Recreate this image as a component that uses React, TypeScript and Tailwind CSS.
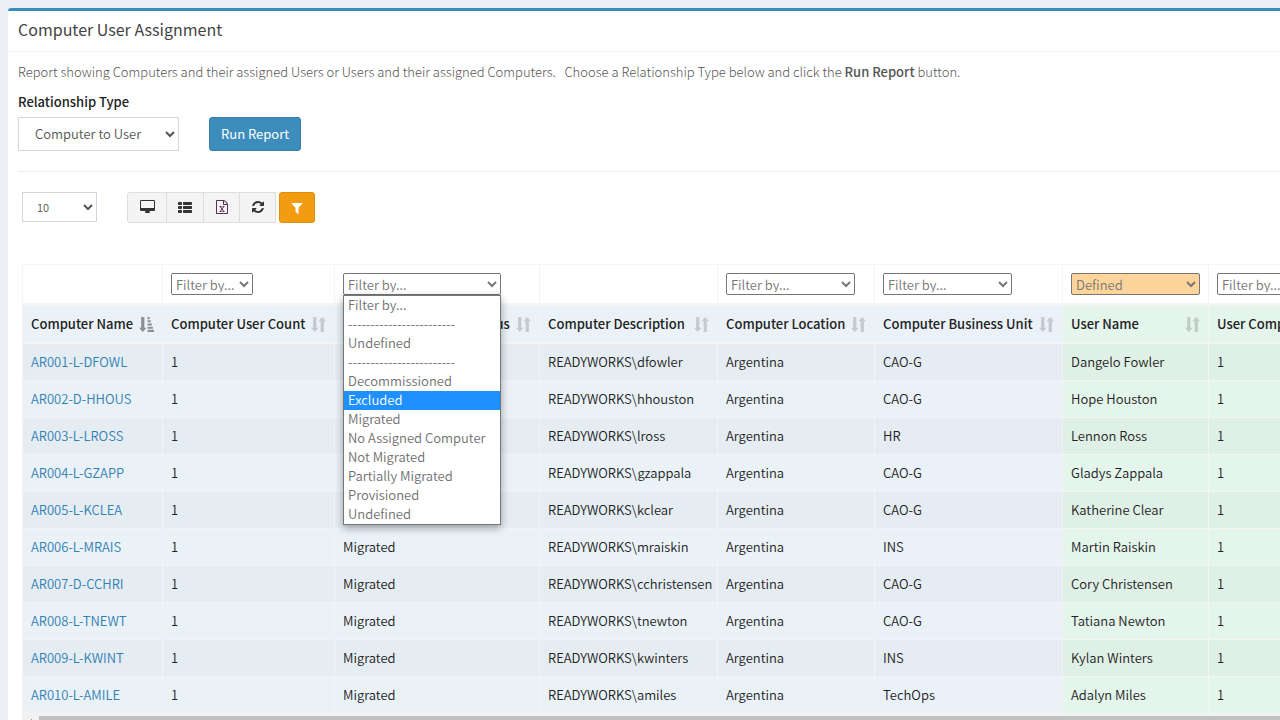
import { useState } from 'react';
import clsx from 'clsx';

type Tone = 'blue' | 'indigo' | 'green';

interface Column {
  key: string;
  label: string;
  width: string;
  tone: Tone;
  filter?: string;
  filterWidth?: string;
}

const COLUMNS: Column[] = [
  { key: 'name', label: 'Computer Name', width: 'w-[140px]', tone: 'blue' },
  { key: 'count', label: 'Computer User Count', width: 'w-[172px]', tone: 'blue', filter: 'Filter by...', filterWidth: 'w-[82px]' },
  { key: 'status', label: 'Computer Migration Status', width: 'w-[205px]', tone: 'blue', filter: 'Filter by...', filterWidth: 'w-[158px]' },
  { key: 'description', label: 'Computer Description', width: 'w-[178px]', tone: 'blue' },
  { key: 'location', label: 'Computer Location', width: 'w-[157px]', tone: 'blue', filter: 'Filter by...', filterWidth: 'w-[129px]' },
  { key: 'unit', label: 'Computer Business Unit', width: 'w-[188px]', tone: 'indigo', filter: 'Filter by...', filterWidth: 'w-[129px]' },
  { key: 'user', label: 'User Name', width: 'w-[146px]', tone: 'green', filter: 'Defined', filterWidth: 'w-[129px]' },
  { key: 'userCount', label: 'User Computer Count', width: 'w-[172px]', tone: 'green', filter: 'Filter by...', filterWidth: 'w-[82px]' },
];

const ROWS = [
  ['AR001-L-DFOWL', 'dfowler', 'CAO-G', 'Dangelo Fowler'],
  ['AR002-D-HHOUS', 'hhouston', 'CAO-G', 'Hope Houston'],
  ['AR003-L-LROSS', 'lross', 'HR', 'Lennon Ross'],
  ['AR004-L-GZAPP', 'gzappala', 'CAO-G', 'Gladys Zappala'],
  ['AR005-L-KCLEA', 'kclear', 'CAO-G', 'Katherine Clear'],
  ['AR006-L-MRAIS', 'mraiskin', 'INS', 'Martin Raiskin'],
  ['AR007-D-CCHRI', 'cchristensen', 'CAO-G', 'Cory Christensen'],
  ['AR008-L-TNEWT', 'tnewton', 'CAO-G', 'Tatiana Newton'],
  ['AR009-L-KWINT', 'kwinters', 'INS', 'Kylan Winters'],
  ['AR010-L-AMILE', 'amiles', 'TechOps', 'Adalyn Miles'],
].map(([name, login, unit, user]) => [name, '1', 'Migrated', `READYWORKS\\${login}`, 'Argentina', unit, user, '1']);

const STATUS_OPTIONS = [
  'Filter by...',
  '------------------------',
  'Undefined',
  '------------------------',
  'Decommissioned',
  'Excluded',
  'Migrated',
  'No Assigned Computer',
  'Not Migrated',
  'Partially Migrated',
  'Provisioned',
  'Undefined',
];

const LIGHT: Record<Tone, string> = { blue: 'bg-[#eaf2f8]', indigo: 'bg-[#eaf1f8]', green: 'bg-[#e4f5ec]' };
const DARK: Record<Tone, string> = { blue: 'bg-[#e5edf3]', indigo: 'bg-[#e5ecf3]', green: 'bg-[#dff0e7]' };

function DesktopIcon() {
  return (
    <svg viewBox="-64 0 1920 1792" className="h-[14px] w-[15px]" fill="currentColor" aria-hidden="true">
      <path d="M1728 992v-832q0-13-9.5-22.5t-22.5-9.5h-1600q-13 0-22.5 9.5t-9.5 22.5v832q0 13 9.5 22.5t22.5 9.5h1600q13 0 22.5-9.5t9.5-22.5zm128-832v1088q0 66-47 113t-113 47h-544q0 37 16 77.5t32 71 16 43.5q0 26-19 45t-45 19h-512q-26 0-45-19t-19-45q0-14 16-44t32-70 16-78h-544q-66 0-113-47t-47-113v-1088q0-66 47-113t113-47h1600q66 0 113 47t47 113z" />
    </svg>
  );
}

function ListIcon() {
  return (
    <svg viewBox="0 0 14 14" className="size-[14px]" fill="currentColor" aria-hidden="true">
      <path d="M.7 2h2.6q.7 0 .7.7v1.6q0 .7-.7.7H.7Q0 5 0 4.300V2.700Q0 2 .7 2zM.7 6h2.600q.7 0 .7.7v1.600q0 .7-.7.7H.7Q0 9 0 8.300V6.700Q0 6 .7 6zM.7 10h2.600q.7 0 .7.7v1.600q0 .7-.7.7H.7q-.7 0-.7-.7v-1.600q0-.7.7-.7zM5.700 2h7.600q.7 0 .7.7v1.600q0 .7-.7.7H5.700Q5 5 5 4.300V2.700Q5 2 5.700 2zM5.700 6h7.600q.7 0 .7.7v1.600q0 .7-.7.7H5.700Q5 9 5 8.300V6.700Q5 6 5.700 6zM5.700 10h7.600q.7 0 .7.7v1.600q0 .7-.7.7H5.700q-.7 0-.7-.7v-1.600q0-.7.7-.7z" />
    </svg>
  );
}

function ExcelIcon() {
  return (
    <svg viewBox="128 0 1536 1792" className="h-[14px] w-3" fill="#5a3050" aria-hidden="true">
      <path d="M1596 380q28 28 48 76t20 88v1152q0 40-28 68t-68 28h-1344q-40 0-68-28t-28-68v-1600q0-40 28-68t68-28h896q40 0 88 20t76 48zm-444-244v376h376q-10-29-22-41l-313-313q-12-12-41-22zm384 1528v-1024h-416q-40 0-68-28t-28-68v-416h-768v1536h1280zm-979-234v106h281v-106h-75l103-161q5-7 10-16.500t7.500-13.500 3.500-4h2q1 4 5 10 2 4 4.500 7.500t6 8 6.500 8.500l107 161h-76v106h291v-106h-68l-192-273 195-282h67v-107h-279v107h74l-103 159q-4 7-10 16.500t-9 13.500l-2 3h-2q-1-4-5-10-6-11-17-23l-106-159h76v-107h-290v107h68l189 272-194 283h-68z" />
    </svg>
  );
}

function RefreshIcon() {
  return (
    <svg viewBox="128 0 1536 1792" className="h-[14px] w-3" fill="currentColor" aria-hidden="true">
      <path d="M1639 1056q0 5-1 7-64 268-268 434.500t-478 166.500q-146 0-282.500-55t-243.500-157l-129 129q-19 19-45 19t-45-19-19-45v-448q0-26 19-45t45-19h448q26 0 45 19t19 45-19 45l-137 137q71 66 161 102t187 36q134 0 250-65t186-179q11-17 53-117 8-23 30-23h192q13 0 22.500 9.500t9.500 22.500zm25-800v448q0 26-19 45t-45 19h-448q-26 0-45-19t-19-45 19-45l138-138q-148-137-349-137-134 0-250 65t-186 179q-11 17-53 117-8 23-30 23h-199q-13 0-22.500-9.500t-9.500-22.500v-7q65-268 270-434.500t480-166.500q146 0 284 55.500t245 156.500l130-129q19-19 45-19t45 19 19 45z" />
    </svg>
  );
}

function FilterIcon() {
  return (
    <svg viewBox="0 0 1792 1792" className="size-[14px]" fill="currentColor" aria-hidden="true">
      <path d="M1595 295q17 41-14 70l-493 493v742q0 42-39 59-13 5-25 5-27 0-45-19l-256-256q-19-19-19-45v-486l-493-493q-31-29-14-70 17-39 59-39h1280q42 0 59 39z" />
    </svg>
  );
}

function SortIcon({ active }: { active: boolean }) {
  return (
    <svg viewBox="0 0 14 14" className={clsx('size-[15px] shrink-0', active ? 'opacity-50' : 'opacity-20')} fill="#333" aria-hidden="true">
      <path d="M2 0h3v10h2l-3.500 4L0 10h2z" />
      {active ? (
        <path d="M8 0h2v2H8zM8 3h3v2H8zM8 6h4v2H8zM8 9h5v2H8zM8 12h6v2H8z" />
      ) : (
        <path d="M10.500 0L14 4h-2v10H9V4H7z" />
      )}
    </svg>
  );
}

function FilterSelect({ column }: { column: Column }) {
  return (
    <select
      aria-label={`Filter ${column.label}`}
      className={clsx(
        'block h-[22px] rounded-[2px] border border-[#767676] pb-[2px] text-[13px] leading-[18px] text-[#777]',
        column.filter === 'Defined' ? 'bg-[#fdd59b]' : 'bg-white',
        column.filterWidth,
      )}
    >
      <option>{column.filter}</option>
    </select>
  );
}

function StatusMenu() {
  const [highlighted, setHighlighted] = useState(5);

  return (
    <ul
      role="listbox"
      aria-label="Computer Migration Status options"
      className="absolute top-full left-0 z-10 w-[158px] border border-[#767676] bg-white text-[13px] leading-[17px] text-[#707070] shadow-[0_3px_8px_rgba(0,0,0,0.35)]"
    >
      {STATUS_OPTIONS.map((option, i) => (
        <li
          key={i}
          role="option"
          aria-selected={i === highlighted}
          onMouseEnter={() => setHighlighted(i)}
          className={clsx('h-[19px] overflow-hidden px-1 whitespace-nowrap', i === highlighted && 'bg-[#1e90ff] text-white')}
        >
          {option}
        </li>
      ))}
    </ul>
  );
}

function Toolbar() {
  const button = 'flex h-[31px] items-center justify-center border border-[#ddd] bg-[#f4f4f4] pb-[2px] text-[#333]';

  return (
    <div className="flex items-start px-1">
      <select aria-label="Rows per page" className="h-[30px] w-[75px] border border-[#d2d6de] bg-white pl-[10px] text-[11px] text-[#555]">
        <option>10</option>
      </select>
      <div className="ml-[30px] flex">
        <button type="button" aria-label="Display" className={clsx(button, 'w-10 rounded-l-[3px]')}><DesktopIcon /></button>
        <button type="button" aria-label="Columns" className={clsx(button, '-ml-px w-[38px]')}><ListIcon /></button>
        <button type="button" aria-label="Export to Excel" className={clsx(button, '-ml-px w-[37px]')}><ExcelIcon /></button>
        <button type="button" aria-label="Refresh" className={clsx(button, '-ml-px w-[37px]')}><RefreshIcon /></button>
      </div>
      <button type="button" aria-label="Toggle filters" className="ml-[3px] flex h-[31px] w-9 items-center justify-center rounded-[3px] border border-[#e08e0b] bg-[#f39c12] text-white">
        <FilterIcon />
      </button>
    </div>
  );
}

function ReportTable() {
  return (
    <table className="w-[1359px] table-fixed border-separate border-spacing-0 border-t border-l border-[#f4f4f4] text-[13px] leading-5 text-[#222]">
      <thead>
        <tr className="h-[41px]">
          {COLUMNS.map((column) => (
            <td key={column.key} className={clsx('border-r border-b-3 border-[#f4f4f4] px-2', column.width)}>
              {column.filter && (
                <div className="relative w-fit">
                  <FilterSelect column={column} />
                  {column.key === 'status' && <StatusMenu />}
                </div>
              )}
            </td>
          ))}
        </tr>
        <tr className="h-[38px]">
          {COLUMNS.map((column) => (
            <th key={column.key} scope="col" className={clsx('border-r border-b-2 border-[#f4f4f4] px-2 text-left font-medium whitespace-nowrap', LIGHT[column.tone])}>
              <div className="flex items-center justify-between">
                {column.label}
                <SortIcon active={column.key === 'name'} />
              </div>
            </th>
          ))}
        </tr>
      </thead>
      <tbody>
        {ROWS.map((row, r) => (
          <tr key={row[0]} className="h-[37px]">
            {row.map((value, c) => (
              <td key={COLUMNS[c].key} className={clsx('border-r border-b border-[#f4f4f4] px-2 whitespace-nowrap', (r % 2 ? LIGHT : DARK)[COLUMNS[c].tone])}>
                {c === 0 ? <a href="#computer" className="text-[#3380b3]">{value}</a> : value}
              </td>
            ))}
          </tr>
        ))}
      </tbody>
    </table>
  );
}

export default function App() {
  return (
    <div className="h-screen overflow-hidden bg-[#ecf0f5] pt-2 pl-2 font-['Noto_Sans_CJK_SC','Source_Sans_Pro',sans-serif] text-[13px] leading-5 font-[350] text-[#333]">
      <section className="rounded-tl-[3px] border-t-3 border-[#3c8dbc] bg-white">
        <header className="border-b border-[#f4f4f4] px-[10px] pt-2 pb-3">
          <h1 className="text-base leading-5 font-normal text-[#444]">Computer User Assignment</h1>
        </header>
        <div className="py-[10px] pl-[10px]">
          <p className="font-light whitespace-nowrap text-[#555]">
            Report showing Computers and their assigned Users or Users and their assigned Computers. &nbsp; Choose a Relationship Type below and click the <b className="font-medium">Run Report</b> button.
          </p>
          <form className="mt-[10px]" onSubmit={(e) => e.preventDefault()}>
            <label htmlFor="relationship" className="block font-medium text-[#222]">Relationship Type</label>
            <div className="mt-[5px] flex gap-[30px]">
              <select id="relationship" className="h-[34px] w-[161px] border border-[#d2d6de] bg-white pb-[2px] pl-3 text-[#555]">
                <option>Computer to User</option>
              </select>
              <button type="submit" className="h-[34px] rounded-[3px] border border-[#367fa9] bg-[#3c8dbc] px-[11px] font-normal text-white">Run Report</button>
            </div>
          </form>
          <hr className="my-5 border-[#eee]" />
          <Toolbar />
          <div className="mt-[41px] ml-1 overflow-hidden">
            <ReportTable />
            <div className="flex h-[17px] bg-[#f1f1f1] pt-[2px]">
              <svg viewBox="0 0 17 13" className="h-[13px] w-[17px] shrink-0" fill="#505050" aria-hidden="true">
                <path d="M10 3v7L6 6.500z" />
              </svg>
              <div className="h-[13px] grow bg-[#c1c1c1]" />
            </div>
          </div>
        </div>
      </section>
    </div>
  );
}
